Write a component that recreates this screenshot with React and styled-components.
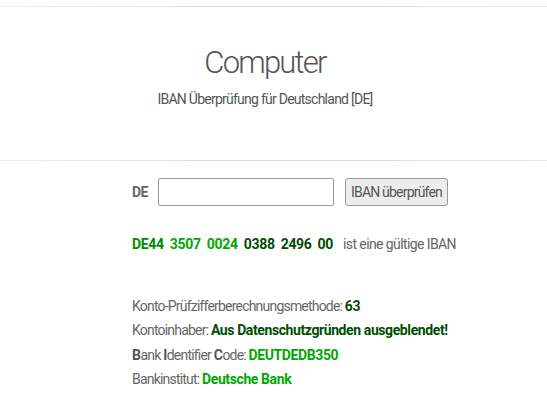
import React from "react";
import styled, { createGlobalStyle } from "styled-components";

const Global = createGlobalStyle`
  html, body { margin: 0; padding: 0; background: #fff; }
  body { font-family: Roboto, "Liberation Sans", sans-serif; color: #666; }
`;

const Page = styled.div`
  width: 547px;
  padding-top: 6px;
`;

const Rule = styled.div`
  height: 1px;
  background: linear-gradient(to right, #f0f0f0, #dcdcdc 40%, #dcdcdc 60%, #e6e6e6);
`;

const Header = styled.header`
  height: 153px;
  display: flex;
  flex-direction: column;
  align-items: center;
  padding: 36px 17px 0 0;
  box-sizing: border-box;
`;

const Title = styled.h1`
  margin: 0;
  font-weight: 300;
  font-size: 31px;
  line-height: 40px;
  letter-spacing: -1.8px;
  color: #555;
`;

const Subtitle = styled.p`
  margin: 8px 0 0;
  font-size: 14px;
  line-height: 17px;
  color: #555;
  letter-spacing: -0.75px;
`;

const Main = styled.main`
  padding: 17px 0 0 132px;
  font-size: 14px;
  letter-spacing: -0.8px;
`;

const FormRow = styled.div`
  display: flex;
  align-items: center;
  height: 28px;
`;

const Label = styled.span`
  font-weight: 700;
  color: #666;
  width: 26px;
  letter-spacing: -0.5px;
`;

const Input = styled.input`
  width: 176px;
  height: 28px;
  box-sizing: border-box;
  border: 1px solid #999;
  border-radius: 2px;
  padding: 0 6px;
  font: inherit;
`;

const Button = styled.button`
  margin-left: 11px;
  width: 103px;
  height: 28px;
  padding: 0;
  box-sizing: border-box;
  border: 1px solid #999;
  border-radius: 3px;
  background: #ededed;
  color: #555;
  font-family: inherit;
  font-size: 14px;
  letter-spacing: -0.8px;
`;

const IbanLine = styled.div`
  margin-top: 28px;
  display: flex;
  align-items: baseline;
  gap: 6px;
  line-height: 20px;
`;

const Group = styled.span`
  font-weight: 700;
  letter-spacing: -0.3px;
  color: ${(p) => p.$c};
`;

const Note = styled.span`
  margin-left: 4px;
  letter-spacing: -0.6px;
  color: #666;
`;

const Details = styled.div`
  margin-top: 40px;
  display: flex;
  flex-direction: column;
`;

const Line = styled.div`
  line-height: 24.33px;
`;

const Val = styled.strong`
  letter-spacing: -0.4px;
  color: ${(p) => p.$c};
`;

const Init = styled.b`
  letter-spacing: -0.5px;
  color: #555;
`;

const DARK = "#004d00";
const MID = "#008a00";
const LIGHT = "#00a800";

export default function App() {
  const groups = [
    ["DE44", MID],
    ["3507", LIGHT],
    ["0024", LIGHT],
    ["0388", DARK],
    ["2496", DARK],
    ["00", DARK],
  ];
  return (
    <Page>
      <Global />
      <Rule />
      <Header>
        <Title>Computer</Title>
        <Subtitle>IBAN Überprüfung für Deutschland [DE]</Subtitle>
      </Header>
      <Rule />
      <Main>
        <FormRow>
          <Label>DE</Label>
          <Input type="text" />
          <Button>IBAN überprüfen</Button>
        </FormRow>
        <IbanLine>
          {groups.map(([g, c]) => (
            <Group key={g + c} $c={c}>{g}</Group>
          ))}
          <Note>ist eine gültige IBAN</Note>
        </IbanLine>
        <Details>
          <Line>
            Konto-Prüfzifferberechnungsmethode: <Val $c={DARK}>63</Val>
          </Line>
          <Line>
            Kontoinhaber: <Val $c={DARK}>Aus Datenschutzgründen ausgeblendet!</Val>
          </Line>
          <Line>
            <Init>B</Init>ank <Init>I</Init>dentifier <Init>C</Init>ode: <Val $c={LIGHT}>DEUTDEDB350</Val>
          </Line>
          <Line>
            Bankinstitut: <Val $c={LIGHT}>Deutsche Bank</Val>
          </Line>
        </Details>
      </Main>
    </Page>
  );
}
